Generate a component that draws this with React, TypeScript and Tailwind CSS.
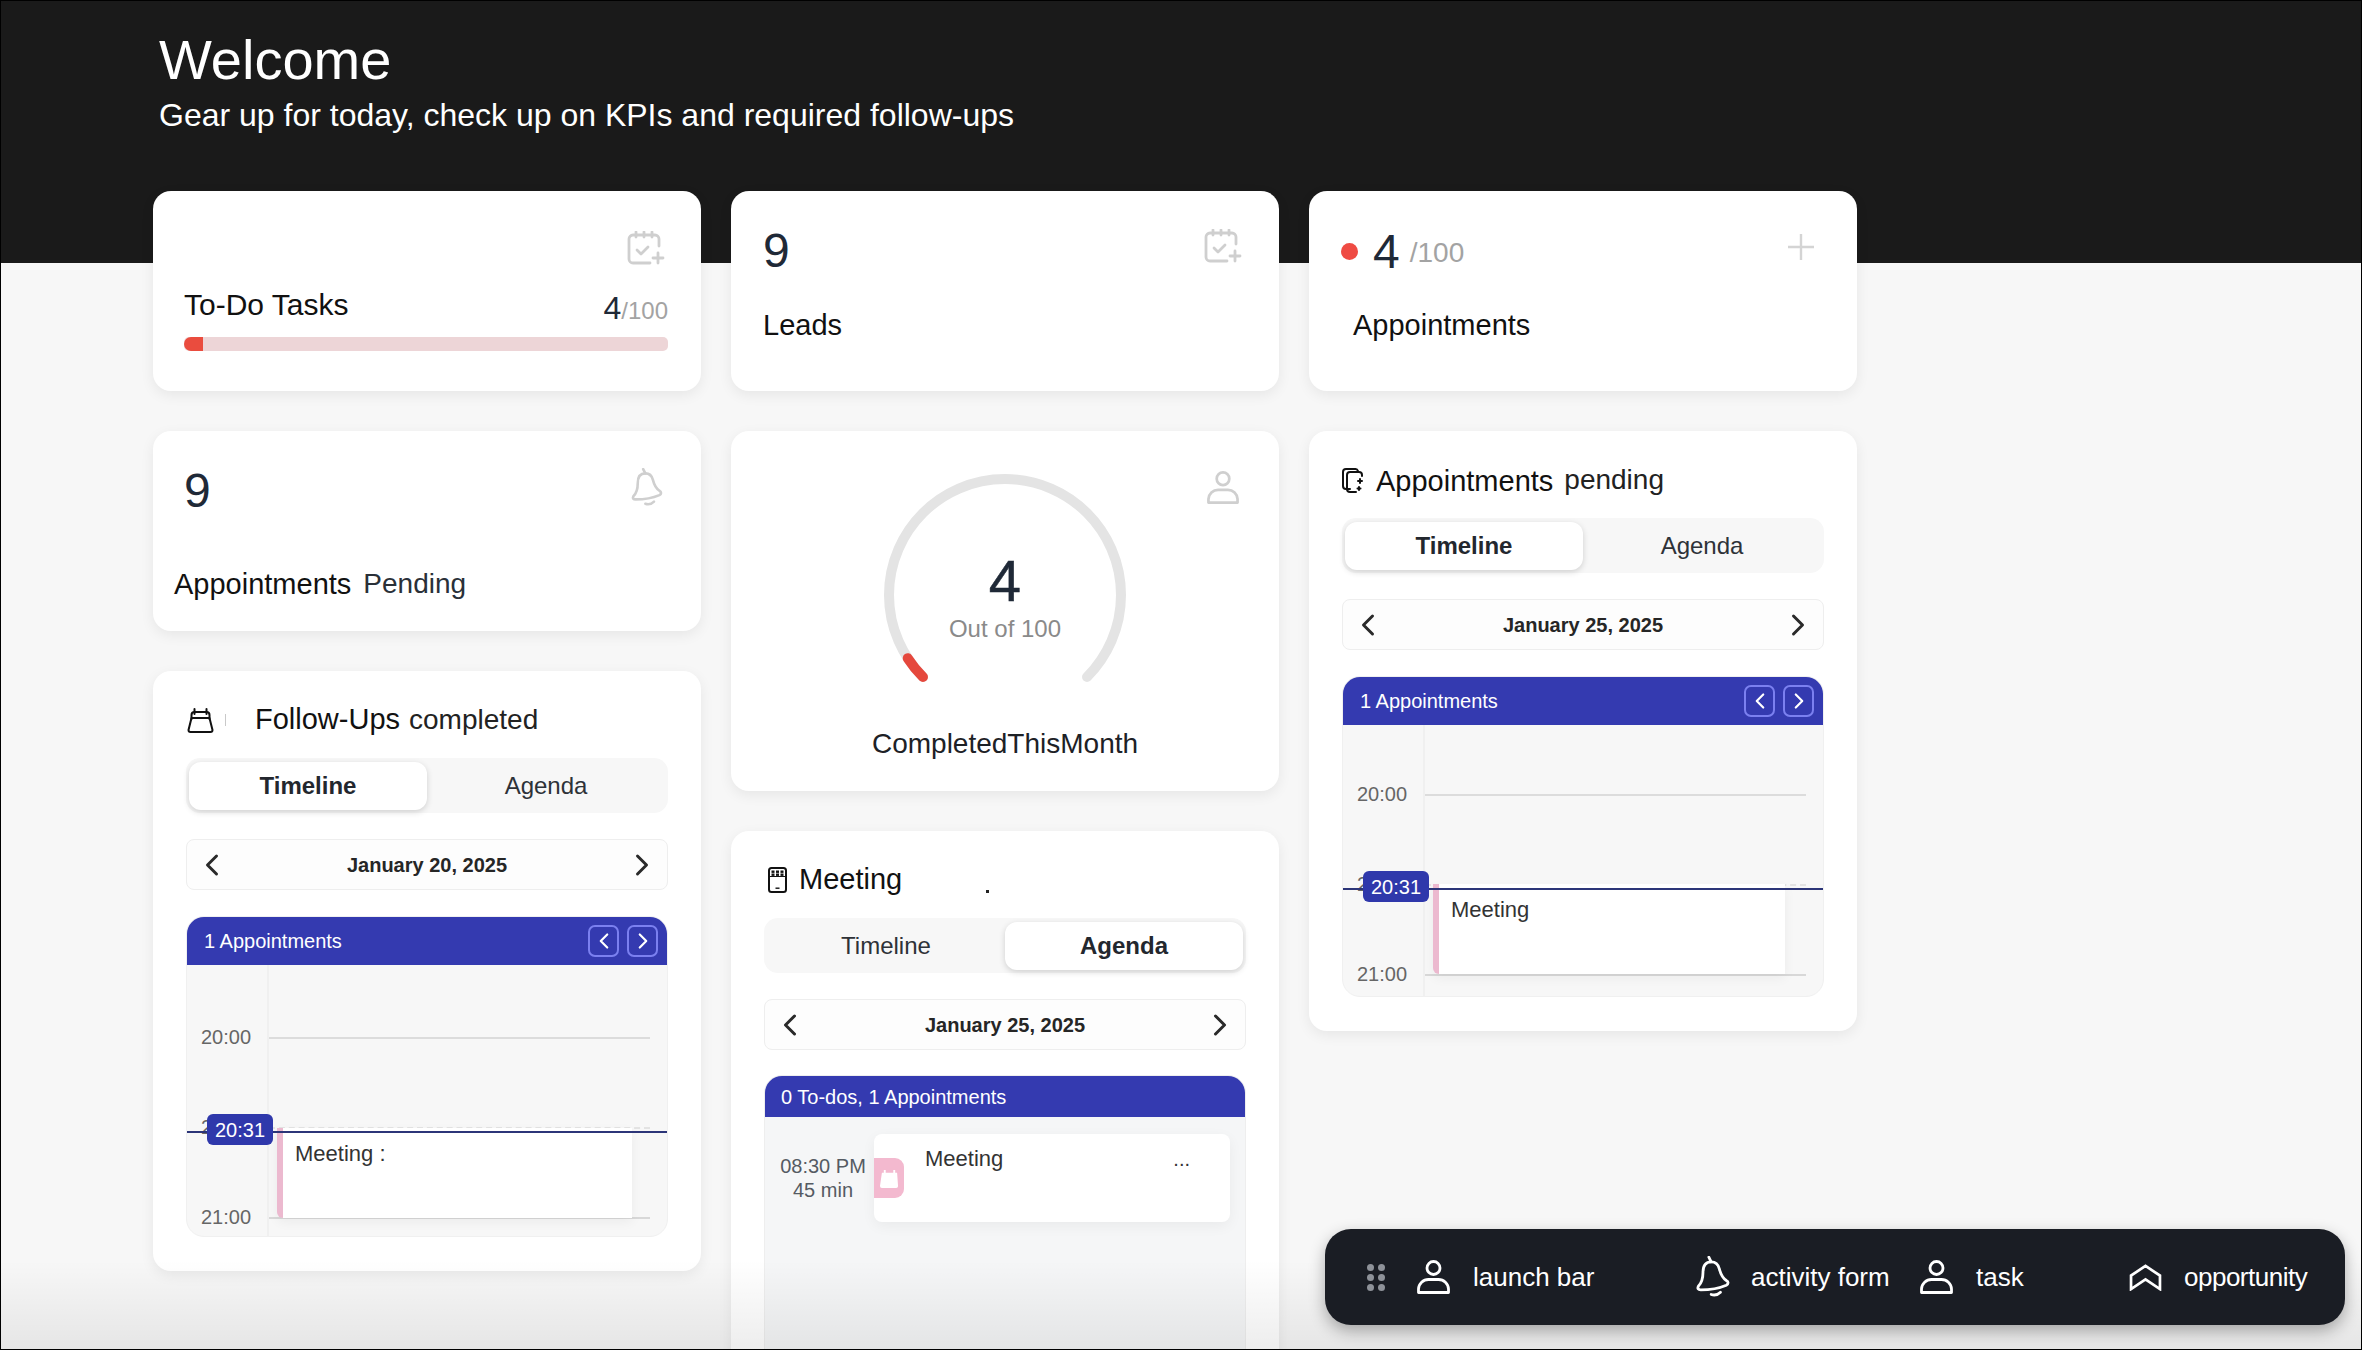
import React from "react";
import { ChevronLeft, ChevronRight } from "lucide-react";

const font = "font-['Liberation_Sans',Arial,sans-serif]";

function CalPlus({ className = "" }: { className?: string }) {
  return (
    <svg viewBox="0 0 38 34" className={className} fill="none" stroke="#cfcfcf" strokeWidth="2.800" strokeLinecap="round" strokeLinejoin="round">
      <path d="M32 15V8a4 4 0 0 0-4-4H6a4 4 0 0 0-4 4v20a4 4 0 0 0 4 4h17" />
      <path d="M9 1v5M17 1v5M25 1v5" />
      <path d="M10 19l4 4 7-7" />
      <path d="M31 22v10M26 27h10" />
    </svg>
  );
}

function PersonIcon({ className = "", color = "#cfcfcf" }: { className?: string; color?: string }) {
  return (
    <svg viewBox="0 0 34 34" className={className} fill="none" stroke={color} strokeWidth="2.800" strokeLinejoin="round">
      <circle cx="17" cy="8" r="6.500" />
      <path d="M2 32.500V29a10 10 0 0 1 10-9.500h10A10 10 0 0 1 32 29v3.500Z" />
    </svg>
  );
}

function BellIcon({ className = "", color = "#cfcfcf" }: { className?: string; color?: string }) {
  return (
    <svg viewBox="0 0 30 36" className={className} fill="none" stroke={color} strokeWidth="2.400" strokeLinecap="round" strokeLinejoin="round">
      <path d="M11 1l2 4" />
      <path d="M13 5c-5 0-7 4-7 9 0 5-1 9-4 12-1 2 0 3 2 3 7 0 15-1 22-4 2-1 2-3 0-4-3-2-5-6-6-10-1-4-3-6-7-6Z" />
      <path d="M13 33c3 1 6 0 8-2" />
    </svg>
  );
}

function BagCalendarIcon() {
  return (
    <svg viewBox="0 0 28 25" className="w-[29px] h-[25px]" fill="none" stroke="#111" strokeWidth="2" strokeLinejoin="round" strokeLinecap="round">
      <path d="M8 1v5M20 1v5" />
      <path d="M5 11V7a3 3 0 0 1 3-3h12a3 3 0 0 1 3 3v4" />
      <path d="M5 10h18l3 12a2 2 0 0 1-2 2H4a2 2 0 0 1-2-2Z" />
    </svg>
  );
}

function DocsIcon() {
  return (
    <svg viewBox="0 0 22 25" className="w-[22px] h-[25px]" fill="none" stroke="#111" strokeWidth="2" strokeLinecap="round" strokeLinejoin="round">
      <path d="M8 21H4a3 3 0 0 1-3-3V4a3 3 0 0 1 3-3h9a3 3 0 0 1 3 2" />
      <path d="M20 8V7a3 3 0 0 0-3-3H8a3 3 0 0 0-3 3v14a3 3 0 0 0 3 3h6" />
      <path d="M18 11v4M16 13h4M17 19v3M15.500 20.500h3" />
    </svg>
  );
}

function PhoneIcon() {
  return (
    <svg viewBox="0 0 19 26" className="w-[19px] h-[26px] ml-[4px]" fill="none">
      <rect x="1" y="1" width="17" height="24" rx="2.500" stroke="#111" strokeWidth="2" />
      <path d="M2 9.500h15" stroke="#111" strokeWidth="1" />
      <g fill="#111">
        <rect x="3.500" y="3.500" width="3" height="2.400" /><rect x="8" y="3.500" width="3" height="2.400" /><rect x="12.500" y="3.500" width="3" height="2.400" />
        <rect x="3.500" y="6.500" width="3" height="2.400" /><rect x="8" y="6.500" width="3" height="2.400" /><rect x="12.500" y="6.500" width="3" height="2.400" />
        <rect x="7.500" y="20.500" width="4" height="1.400" />
      </g>
    </svg>
  );
}

function ChevronHouse() {
  return (
    <svg viewBox="0 0 34 28" className="w-[33px] h-[27px]" fill="none" stroke="#fff" strokeWidth="2.800" strokeLinejoin="miter">
      <path d="M2 26V12L17 2l15 10v14L17 16Z" />
    </svg>
  );
}

function GaugeArc() {
  const cx = 121, cy = 121, r = 116;
  const pt = (deg: number) => {
    const a = (deg * Math.PI) / 180;
    return `${cx + r * Math.cos(a)} ${cy + r * Math.sin(a)}`;
  };
  return (
    <svg width="242" height="212" viewBox="0 0 242 212" fill="none" strokeLinecap="round" strokeWidth="10">
      <path d={`M${pt(135)} A${r} ${r} 0 1 1 ${pt(45)}`} stroke="#e4e4e4" />
      <path d={`M${pt(135)} A${r} ${r} 0 0 1 ${pt(147)}`} stroke="#e5483d" />
    </svg>
  );
}

function Card({ className = "", children }: { className?: string; children: React.ReactNode }) {
  return <div className={`relative bg-white rounded-[18px] shadow-[0_4px_14px_rgba(0,0,0,0.07)] ${className}`}>{children}</div>;
}

function Tabs({ active }: { active: "Timeline" | "Agenda" }) {
  const on = "h-[48px] flex items-center justify-center rounded-[12px] bg-white shadow-[0_2px_6px_rgba(0,0,0,0.16)] font-bold text-[24px] text-[#23272e]";
  const off = "h-[48px] flex items-center justify-center text-[24px] text-[#2e3238]";
  return (
    <div className="grid grid-cols-2 h-[55px] items-center px-[3px] rounded-[14px] bg-[#f7f7f7]">
      <div className={active === "Timeline" ? on : off}>Timeline</div>
      <div className={active === "Agenda" ? on : off}>Agenda</div>
    </div>
  );
}

function DateBar({ date }: { date: string }) {
  return (
    <div className="mt-[26px] h-[51px] flex items-center justify-between px-[7px] rounded-[8px] border border-[#eeeeee] bg-[#fdfdfd]">
      <ChevronLeft size={36} strokeWidth={2} className="text-[#2a2a2a]" />
      <span className="font-bold text-[20px] text-[#262626]">{date}</span>
      <ChevronRight size={36} strokeWidth={2} className="text-[#2a2a2a]" />
    </div>
  );
}

function TimelineView({ label, shifted }: { label: string; shifted: boolean }) {
  const row = "h-[28px] flex items-center pl-[14px]";
  const hour = "w-[68px] -mt-[3px] text-[20px] text-[#666666] shrink-0";
  return (
    <div className="mt-[26px] h-[321px] flex flex-col rounded-[18px] bg-[#f7f7f7] border border-[#f0f0f0] overflow-hidden">
      <div className="h-[48px] shrink-0 flex items-center justify-between pl-[17px] pr-[9px] bg-[#343ab0] text-white text-[20px]">
        <span>1 Appointments</span>
        <div className="flex gap-[8px]">
          <div className="w-[31px] h-[32px] flex items-center justify-center rounded-[7px] border-2 border-[#7b80f0]"><ChevronLeft size={26} strokeWidth={2} /></div>
          <div className="w-[31px] h-[32px] flex items-center justify-center rounded-[7px] border-2 border-[#7b80f0]"><ChevronRight size={26} strokeWidth={2} /></div>
        </div>
      </div>
      <div className={`relative flex-1 flex flex-col gap-[62px] pr-[17px] ${shifted ? "pt-[59px]" : "pt-[56px]"}`}>
        <div className="absolute left-[80px] top-0 bottom-0 w-[2px] bg-[#f0f0f0]" />
        <div className={row}><span className={hour}>20:00</span><div className="flex-1 h-[2px] bg-[#dcdcdc]" /></div>
        <div className={row}><span className={hour}>20:30</span><div className="flex-1 h-[2px] border-t-2 border-dashed border-[#e3e3e3]" /></div>
        <div className={row}><span className={hour}>21:00</span><div className="flex-1 h-[2px] bg-[#d8d8d8]" /></div>
        <div className={`absolute left-[90px] h-[90px] bg-white border-l-[6px] border-[#ecb9cf] rounded-bl-[6px] shadow-[0_4px_12px_rgba(0,0,0,0.05)] pl-[12px] pt-[13px] text-[22px] leading-[26px] text-[#333333] ${shifted ? "top-[163px] w-[355px]" : "top-[159px] w-[352px]"}`}>
          {label}
        </div>
        <div className={`absolute left-0 right-0 h-[2px] bg-[#2c3578] ${shifted ? "top-[166px]" : "top-[163px]"}`}>
          <div className="absolute left-[20px] -top-[17px] w-[66px] h-[31px] flex items-center justify-center rounded-[6px] bg-[#2f38ab] text-white text-[20px]">20:31</div>
        </div>
      </div>
    </div>
  );
}

function AgendaView() {
  return (
    <div className="mt-[25px] h-[330px] rounded-t-[18px] bg-[#f5f6f7] border border-[#eeeeee] overflow-hidden">
      <div className="h-[41px] flex items-center pl-[16px] bg-[#343ab0] text-white text-[20px]">0 To-dos, 1 Appointments</div>
      <div className="flex items-start gap-[8px] pl-[15px] pr-[15px] pt-[17px]">
        <div className="w-[86px] pt-[20px] text-center text-[20px] leading-[24px] text-[#555b63] shrink-0 whitespace-nowrap">
          <div>08:30 PM</div>
          <div>45 min</div>
        </div>
        <div className="relative flex-1 h-[88px] flex items-start rounded-[8px] bg-white shadow-[0_4px_14px_rgba(0,0,0,0.05)]">
          <div className="mt-[24px] w-[30px] h-[40px] flex items-center justify-center rounded-r-[9px] bg-[#f3b9cf]">
            <svg viewBox="0 0 22 20" className="w-[21px] h-[19px]" fill="#fff"><path d="M5 1h2v3h8V1h2v3h2l1 14a2 2 0 0 1-2 2H3a2 2 0 0 1-2-2L3 4h2Z" /></svg>
          </div>
          <div className="ml-[21px] pt-[12px] text-[22px] leading-[26px] text-[#333333]">Meeting</div>
          <div className="ml-auto mr-[40px] pt-[12px] text-[20px] leading-[26px] text-[#333333]">...</div>
        </div>
      </div>
    </div>
  );
}

function LaunchItem({ icon, label, width, tight }: { icon: React.ReactNode; label: string; width: string; tight?: boolean }) {
  return (
    <div className={`flex items-center gap-[22px] ${width}`}>
      {icon}
      <span className={`text-[26px] text-white whitespace-nowrap ${tight ? "tracking-[-0.5px]" : ""}`}>{label}</span>
    </div>
  );
}

export default function App() {
  return (
    <div className={`relative w-full h-[1350px] overflow-hidden bg-[#f7f7f7] ${font}`}>
      <header className="h-[263px] bg-[#1a1a1a] pl-[159px] pt-[27px] text-white">
        <h1 className="text-[56px] leading-[66px]">Welcome</h1>
        <p className="text-[32px] leading-[44px]">Gear up for today, check up on KPIs and required follow-ups</p>
      </header>

      <main className="-mt-[72px] ml-[153px] grid grid-cols-[548px_548px_548px] gap-x-[30px] items-start">
        <div className="flex flex-col gap-[40px]">
          <Card className="h-[200px] pl-[31px] pr-[33px] pt-[40px]">
            <div className="flex justify-end"><CalPlus className="w-[38px] h-[34px] mr-[3px]" /></div>
            <div className="flex items-end justify-between mt-[23px]">
              <span className="text-[30px] leading-[34px] text-[#111111] -mb-[5px]">To-Do Tasks</span>
              <span className="leading-[34px] -mb-[14px]"><span className="text-[32px] text-[#1f2937]">4</span><span className="text-[24px] text-[#a3a3a3]">/100</span></span>
            </div>
            <div className="mt-[20px] h-[14px] rounded-[5px] bg-[#edd5d7] overflow-hidden">
              <div className="h-full w-[19px] rounded-l-[7px] bg-[#ea4c3e]" />
            </div>
          </Card>

          <Card className="h-[200px]">
            <div className="flex items-start justify-between pl-[31px] pr-[37px] pt-[33px]">
              <span className="text-[48px] leading-[54px] text-[#1f2937]">9</span>
              <BellIcon className="w-[33px] h-[39px] mt-[4px]" />
            </div>
            <div className="mt-[49px] pl-[21px] flex gap-[12px] text-[29px] leading-[34px]">
              <span className="text-[#111111]">Appointments</span>
              <span className="text-[#2a3038] text-[28px]">Pending</span>
            </div>
          </Card>

          <Card className="h-[600px] px-[33px] pt-[31px]">
            <div className="h-[56px] pb-[20px] flex items-center text-[#111111]">
              <BagCalendarIcon />
              <span className="ml-[10px] w-[1px] h-[12px] bg-[#c9c9c9]" />
              <span className="ml-[29px] text-[29px]">Follow-Ups</span>
              <span className="ml-[9px] text-[28px] text-[#222222]">completed</span>
            </div>
            <Tabs active="Timeline" />
            <DateBar date="January 20, 2025" />
            <TimelineView label="Meeting :" shifted />
          </Card>
        </div>

        <div className="flex flex-col gap-[40px]">
          <Card className="h-[200px]">
            <div className="flex items-start justify-between pl-[32px] pr-[37px] pt-[33px]">
              <span className="text-[48px] leading-[54px] text-[#1f2937]">9</span>
              <CalPlus className="w-[38px] h-[34px] mt-[5px]" />
            </div>
            <div className="mt-[30px] pl-[32px] text-[29px] leading-[34px] text-[#111111]">Leads</div>
          </Card>

          <Card className="h-[360px] flex flex-col items-center pt-[43px]">
            <PersonIcon className="absolute right-[39px] top-[40px] w-[34px] h-[33px]" />
            <div className="relative w-[242px] h-[212px]">
              <GaugeArc />
              <div className="absolute inset-x-0 top-[77px] flex flex-col items-center">
                <span className="text-[58px] leading-[60px] text-[#1f2937] [-webkit-text-stroke:0.5px_#1f2937]">4</span>
                <span className="mt-[4px] text-[24px] leading-[28px] text-[#8a8a8a]">Out of 100</span>
              </div>
            </div>
            <div className="mt-[41px] text-[28px] leading-[34px] text-[#1d2126]">CompletedThisMonth</div>
          </Card>

          <Card className="h-[640px] px-[33px] pt-[31px]">
            <div className="h-[56px] pb-[20px] flex items-center text-[29px] text-[#111111] gap-[12px]">
              <PhoneIcon />
              <span>Meeting</span>
              <span className="ml-[72px] mt-[22px] w-[3px] h-[3px] bg-[#222222]" />
            </div>
            <Tabs active="Agenda" />
            <DateBar date="January 25, 2025" />
            <AgendaView />
          </Card>
        </div>

        <div className="flex flex-col gap-[40px]">
          <Card className="h-[200px]">
            <div className="flex items-center pl-[32px] pr-[42px] pt-[39px] h-[82px]">
              <span className="w-[17px] h-[17px] rounded-full bg-[#ef4b43]" />
              <span className="ml-[15px] text-[48px] leading-[54px] text-[#1f2937]">4</span>
              <span className="ml-[10px] mt-[2px] text-[28px] text-[#a3a3a3]">/100</span>
              <svg viewBox="0 0 28 28" className="ml-auto -mt-[10px] w-[28px] h-[28px]" stroke="#d4d4d4" strokeWidth="2.400"><path d="M14 1v26M1 14h26" /></svg>
            </div>
            <div className="mt-[35px] pl-[44px] text-[29px] leading-[34px] text-[#111111]">Appointments</div>
          </Card>

          <Card className="h-[600px] px-[33px] pt-[31px]">
            <div className="h-[56px] pb-[20px] flex items-center text-[#111111]">
              <DocsIcon />
              <span className="ml-[12px] mt-[3px] text-[29px]">Appointments</span>
              <span className="ml-[11px] -mt-[1px] text-[28px] text-[#222222]">pending</span>
            </div>
            <Tabs active="Timeline" />
            <DateBar date="January 25, 2025" />
            <TimelineView label="Meeting" shifted={false} />
          </Card>
        </div>
      </main>

      <div className="absolute inset-x-0 bottom-0 h-[90px] bg-gradient-to-b from-transparent to-[rgba(0,0,0,0.07)]" />

      <nav className="absolute left-[1325px] top-[1229px] w-[1020px] h-[96px] flex items-center pl-[42px] rounded-[26px] bg-[#1a1d24] shadow-[0_6px_16px_rgba(0,0,0,0.3)]">
        <div className="grid grid-cols-2 gap-x-[4px] gap-y-[3px] w-[17px] mr-[32px]">
          {[0, 1, 2, 3, 4, 5].map((i) => <span key={i} className="w-[7px] h-[7px] rounded-full bg-[#8e9299]" />)}
        </div>
        <LaunchItem width="w-[280px]" icon={<PersonIcon color="#ffffff" className="w-[35px] h-[34px]" />} label="launch bar" />
        <LaunchItem width="w-[223px]" icon={<BellIcon color="#ffffff" className="w-[35px] h-[42px] -mr-[2px]" />} label="activity form" />
        <LaunchItem width="w-[210px]" icon={<PersonIcon color="#ffffff" className="w-[35px] h-[34px]" />} label="task" />
        <LaunchItem width="w-[200px]" tight icon={<ChevronHouse />} label="opportunity" />
      </nav>

      <div className="absolute inset-0 border border-black pointer-events-none" />
    </div>
  );
}
